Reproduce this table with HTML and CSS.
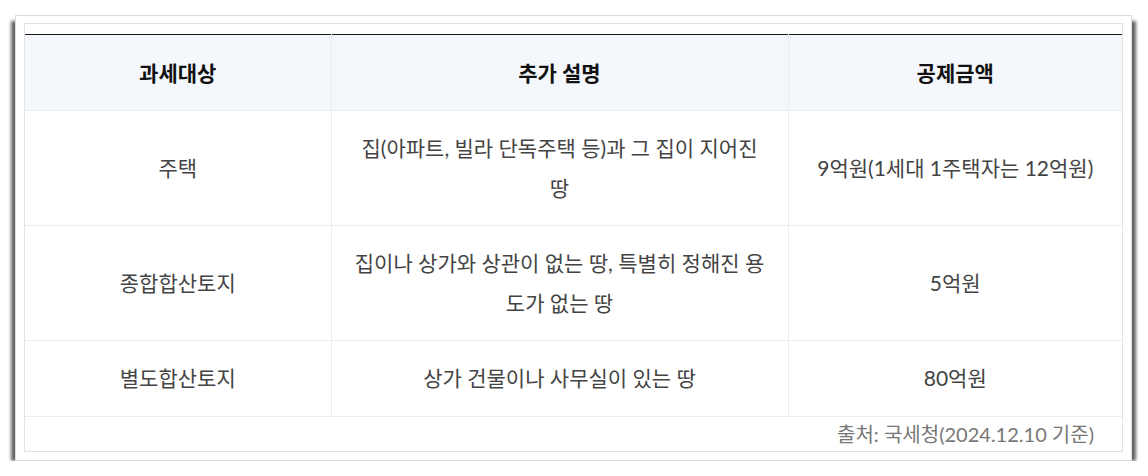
FILE: index.html
```html
<!DOCTYPE html>
<html lang="ko">
<head>
<meta charset="utf-8">
<link rel="stylesheet" href="styles.css">
</head>
<body>
<div class="frame">
  <div class="box">
    <table class="tax">
      <colgroup>
        <col class="c1"><col class="c2"><col class="c3">
      </colgroup>
      <thead>
        <tr><th>과세대상</th><th>추가 설명</th><th>공제금액</th></tr>
      </thead>
      <tbody>
        <tr><td>주택</td><td>집(아파트, 빌라 단독주택 등)과 그 집이 지어진 땅</td><td>9억원(1세대 1주택자는 12억원)</td></tr>
        <tr><td>종합합산토지</td><td>집이나 상가와 상관이 없는 땅, 특별히 정해진 용도가 없는 땅</td><td>5억원</td></tr>
        <tr class="single"><td>별도합산토지</td><td>상가 건물이나 사무실이 있는 땅</td><td>80억원</td></tr>
        <tr class="src"><td colspan="3">출처: 국세청(2024.12.10 기준)</td></tr>
      </tbody>
    </table>
  </div>
</div>
</body>
</html>
```
FILE: styles.css
```css
html, body {
  margin: 0;
  padding: 0;
  background: #ffffff;
}
body {
  font-family: Lato, "Noto Sans CJK KR", sans-serif;
  color: #444;
}
.frame {
  margin: 15px 0 0 15px;
  width: 1099px;
  padding: 7px 8px 8px 8px;
  border: 1px solid #dcdcdc;
  background: #fff;
  box-shadow: -7px 3px 3px -3px rgba(0,0,0,0.6), 7px 3px 3px -3px rgba(0,0,0,0.6);
}
.box {
  border: 1px solid #e2e2e2;
  padding-top: 10px;
}
.tax {
  width: 100%;
  border-collapse: collapse;
  table-layout: fixed;
  border-top: 1px solid #1a1a1a;
}
.c1 { width: 306px; }
.c2 { width: 457px; }
.c3 { width: auto; }
.tax th, .tax td {
  font-size: 21px;
  line-height: 40px;
  padding: 17px 18px;
  text-align: center;
  border: 1px solid #e9ecf2;
  border-top: none;
  word-break: break-all;
}
.tax tr > :first-child { border-left: none; }
.tax tr > :last-child { border-right: none; }
.tax th {
  background: #f4f8fd;
  color: #111;
  font-weight: 700;
  padding-top: 18px;
}
.tax td {
  color: #444;
  font-weight: 400;
}
.tax .single td {
  padding-bottom: 18px;
}
.tax .src td {
  text-align: right;
  color: #777;
  font-size: 20px;
  line-height: 34px;
  padding: 0 28px 0 0;
  border-bottom: none;
}
```
